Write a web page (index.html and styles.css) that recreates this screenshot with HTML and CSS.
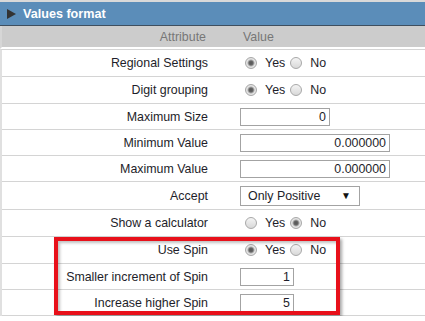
FILE: index.html
```html
<!DOCTYPE html>
<html lang="en">
<head>
    <meta charset="UTF-8">
    <title>Values format</title>
    <link rel="stylesheet" href="styles.css">
</head>
<body>
    <div class="panel">
        <div class="panel-title"><span class="arrow"></span>Values format</div>
        <div class="grid-head">
            <div class="head-attr">Attribute</div>
            <div class="head-value">Value</div>
        </div>
        <div class="rows">
            <div class="row row-radio">
                <div class="label">Regional Settings</div>
                <div class="value">
                    <span class="radio checked"></span><span class="opt">Yes</span>
                    <span class="radio"></span><span class="opt">No</span>
                </div>
            </div>
            <div class="row row-radio">
                <div class="label">Digit grouping</div>
                <div class="value">
                    <span class="radio checked"></span><span class="opt">Yes</span>
                    <span class="radio"></span><span class="opt">No</span>
                </div>
            </div>
            <div class="row row-input">
                <div class="label">Maximum Size</div>
                <div class="value"><input class="field field-md" type="text" value="0"></div>
            </div>
            <div class="row row-input">
                <div class="label">Minimum Value</div>
                <div class="value"><input class="field field-lg" type="text" value="0.000000"></div>
            </div>
            <div class="row row-input">
                <div class="label">Maximum Value</div>
                <div class="value"><input class="field field-lg" type="text" value="0.000000"></div>
            </div>
            <div class="row row-select">
                <div class="label">Accept</div>
                <div class="value">
                    <div class="dropdown"><span>Only Positive</span><span class="caret">&#9660;</span></div>
                </div>
            </div>
            <div class="row row-radio">
                <div class="label">Show a calculator</div>
                <div class="value">
                    <span class="radio"></span><span class="opt">Yes</span>
                    <span class="radio checked"></span><span class="opt">No</span>
                </div>
            </div>
            <div class="row row-radio">
                <div class="label">Use Spin</div>
                <div class="value">
                    <span class="radio checked"></span><span class="opt">Yes</span>
                    <span class="radio"></span><span class="opt">No</span>
                </div>
            </div>
            <div class="row row-input">
                <div class="label">Smaller increment of Spin</div>
                <div class="value"><input class="field field-sm" type="text" value="1"></div>
            </div>
            <div class="row row-input">
                <div class="label">Increase higher Spin</div>
                <div class="value"><input class="field field-sm" type="text" value="5"></div>
            </div>
        </div>

        <!-- annotation box -->
        <div class="highlight"></div>
    </div>
</body>
</html>
```

FILE: styles.css
```css
body {
    margin: 0;
    font-family: "Liberation Sans", Arial, sans-serif;
    font-size: 12.4px;
    color: #1e1e2a;
    background-color: #fff;
}

.panel {
    position: relative;
    border-top: 2px solid #d9d9d9;
}

.panel-title {
    display: flex;
    align-items: center;
    height: 23px;
    padding-left: 7px;
    background-color: #5b8db9;
    border-bottom: 1px solid #3f4f5f;
    color: #fff;
    font-weight: bold;
    font-size: 12.6px;
}

.arrow {
    width: 0;
    height: 0;
    border-left: 9px solid #333;
    border-top: 5px solid transparent;
    border-bottom: 5px solid transparent;
    margin-right: 7px;
}

.grid-head {
    display: grid;
    grid-template-columns: 214px 1fr;
    align-items: center;
    height: 21px;
    background-color: #cccccc;
    border-bottom: 2px solid #fff;
    border-left: 2px solid #d6d6d6;
    color: #777;
}

.head-attr {
    text-align: right;
    padding-right: 10px;
}

.head-value {
    padding-left: 27px;
}

.rows {
    border-top: 1px solid #d4d4d4;
    border-left: 2px solid #e0e0e0;
}

.row {
    display: grid;
    grid-template-columns: 214px 1fr;
    align-items: center;
    box-sizing: border-box;
    border-bottom: 1px solid #d4d4d4;
}

.row-radio {
    height: 27px;
}

.row-input {
    height: 26px;
}

.row-select {
    height: 28px;
}

.label {
    text-align: right;
    padding-right: 8px;
}

.value {
    display: flex;
    align-items: center;
    padding-left: 24px;
}

.radio {
    display: inline-block;
    box-sizing: border-box;
    width: 12px;
    height: 12px;
    margin: 0 8px 0 5px;
    border: 1px solid #a8a8a8;
    border-radius: 50%;
    background: linear-gradient(#f4f4f4, #d8d8d8);
}

.radio.checked {
    background: radial-gradient(circle, #555 0, #666 2px, #aaa 3px, #e6e6e6 4px, #dcdcdc 6px);
}

.field {
    box-sizing: border-box;
    height: 18px;
    padding: 0 3px;
    border: 1px solid #a3a3a3;
    font-family: "Liberation Sans", Arial, sans-serif;
    font-size: 12.4px;
    color: #1e1e2a;
    text-align: right;
    outline: none;
}

.field-sm {
    width: 54px;
}

.field-md {
    width: 90px;
}

.field-lg {
    width: 150px;
}

.dropdown {
    box-sizing: border-box;
    display: flex;
    align-items: center;
    justify-content: space-between;
    width: 120px;
    height: 20px;
    padding: 0 8px 0 7px;
    border: 1px solid #a3a3a3;
}

.caret {
    font-size: 10px;
    color: #111;
}

.highlight {
    position: absolute;
    left: 54px;
    top: 235px;
    width: 286px;
    height: 78px;
    box-sizing: border-box;
    border: 4px solid #e8101a;
    box-shadow: 2px 2px 3px rgba(0, 0, 0, 0.35), inset 2px 2px 3px rgba(0, 0, 0, 0.25);
}
```
